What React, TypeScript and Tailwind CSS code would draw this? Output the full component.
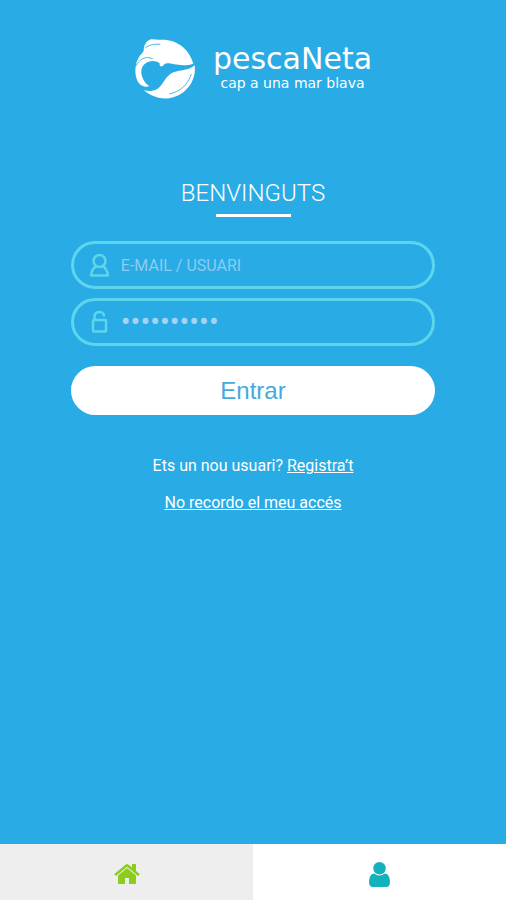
import { useState } from "react";

function FishLogo() {
  return (
    <svg viewBox="40 22 183 183" className="w-[61px] h-[61px]" aria-hidden="true">
      <path
        fill="#fff"
        d="M69 60C69 45 75 33 87 27C97 23 108 29 120 27C170 25 206 56 218 99C200 105 180 104 160 101C148 98 140 97 134 99C129 100 129 106 123 107C118 108 116 104 117 98C108 91 96 89 84 93C68 99 61 111 62 127C64 144 73 157 86 167C73 171 57 166 49 148C39 121 45 91 59 73C62 69 67 66 69 60Z"
      />
      <path
        fill="#fff"
        d="M222 104C227 140 208 172 179 191C146 211 103 207 69 178C88 184 106 180 117 169C130 155 134 140 150 129C171 117 200 123 222 104Z"
      />
      <path
        fill="none"
        stroke="#29abe5"
        strokeWidth="2.5"
        d="M73 53C84 43 101 39 119 41M46 106C57 85 74 75 96 84M146 190C178 183 202 162 212 130"
      />
    </svg>
  );
}

function UserOutlineIcon() {
  return (
    <svg
      viewBox="0 0 20 24"
      className="w-5 h-6"
      fill="none"
      stroke="currentColor"
      strokeWidth="2.5"
      strokeLinejoin="round"
      aria-hidden="true"
    >
      <circle cx="10.500" cy="8" r="6" />
      <path d="M7 13C4 15.500 2.500 18.500 2 22.500H19C18.500 18.500 17 15.500 14 13" />
    </svg>
  );
}

function LockOutlineIcon() {
  return (
    <svg
      viewBox="0 0 20 24"
      className="w-5 h-6"
      fill="none"
      stroke="currentColor"
      strokeWidth="2.5"
      strokeLinejoin="round"
      strokeLinecap="round"
      aria-hidden="true"
    >
      <rect x="4" y="10" width="13" height="11.500" rx="1" />
      <path d="M5.500 10V6.500C5.500 1 14.500 .5 15 5.500" />
    </svg>
  );
}

function HomeIcon() {
  return (
    <svg viewBox="0 253 1664 1283" className="w-[26px] h-5" fill="currentColor" aria-hidden="true">
      <path d="M1408 992v480q0 26-19 45t-45 19H960v-384H704v384H320q-26 0-45-19t-19-45V992q0-1 .5-3t.5-3l575-474 575 474q1 2 1 6zm223-69l-62 74q-8 9-21 11h-3q-13 0-21-7L832 424l-692 577q-12 8-24 7-13-2-21-11l-62-74q-8-10-7-23.500T37 878l719-599q32-26 76-26t76 26l244 204V288q0-14 9-23t23-9h192q14 0 23 9t9 23v408l219 182q10 8 11 21.500t-7 23.500z" />
    </svg>
  );
}

function UserIcon() {
  return (
    <svg viewBox="0 128 1280 1536" className="w-[21px] h-[25px]" fill="currentColor" aria-hidden="true">
      <path d="M1280 1399q0 109-62.500 187t-150.500 78H213q-88 0-150.500-78T0 1399q0-85 8.500-160.500t31.500-152 58.500-131 94-89T327 832q131 128 313 128t313-128q76 0 134.500 34.500t94 89 58.500 131 31.500 152 8.500 160.500zm-256-887q0 159-112.500 271.500T640 896 368.500 783.500 256 512t112.500-271.500T640 128t271.500 112.500T1024 512z" />
    </svg>
  );
}

export default function App() {
  const [user, setUser] = useState<string>("");
  const [password, setPassword] = useState<string>("pescaneta1");

  const handleSubmit = (event: React.FormEvent) => {
    event.preventDefault();
  };

  return (
    <div className="min-h-screen flex flex-col bg-[#29abe5] text-white font-[Roboto,sans-serif]">
      <header className="flex justify-center gap-[18px] pt-[38px]">
        <FishLogo />
        <div className="flex flex-col items-center pt-[5px] font-['DejaVu_Sans',sans-serif]">
          <span className="text-[30px] leading-8">pescaNeta</span>
          <span className="text-sm leading-4">cap a una mar blava</span>
        </div>
      </header>

      <main className="flex-1 flex flex-col px-[14%] pt-[78px]">
        <h1 className="text-2xl font-light text-center">BENVINGUTS</h1>
        <div className="w-[75px] h-[3px] mt-[5px] mx-auto bg-white" />

        <form onSubmit={handleSubmit} className="flex flex-col mt-6">
          <label className="flex items-center gap-3 h-12 px-[15px] rounded-full border-3 border-[#5cd6ec] text-[#5cd6ec]">
            <UserOutlineIcon />
            <input
              type="text"
              aria-label="E-mail / Usuari"
              placeholder="E-MAIL / USUARI"
              value={user}
              onChange={(e) => setUser(e.target.value)}
              className="flex-1 min-w-0 pt-0.5 text-base text-[#8ccdf0] placeholder:text-[#8ccdf0] focus:outline-none"
            />
          </label>
          <label className="flex items-center gap-3 h-12 px-[15px] mt-[9px] rounded-full border-3 border-[#5cd6ec] text-[#5cd6ec]">
            <LockOutlineIcon />
            <input
              type="password"
              aria-label="Contrasenya"
              value={password}
              onChange={(e) => setPassword(e.target.value)}
              className="flex-1 min-w-0 pt-0.5 text-[29px] text-[#a5d4f2] focus:outline-none"
            />
          </label>
          <button
            type="submit"
            className="h-[49px] mt-5 rounded-full bg-white text-[#45a9dc] text-2xl font-['Liberation_Sans',sans-serif]"
          >
            Entrar
          </button>
        </form>

        <div className="flex flex-col items-center gap-[13px] mt-[39px] text-base">
          <p>
            Ets un nou usuari?{" "}
            <a href="#registre" className="underline">
              Registra’t
            </a>
          </p>
          <a href="#acces" className="underline">
            No recordo el meu accés
          </a>
        </div>
      </main>

      <nav className="grid grid-cols-2 h-14">
        <a
          href="#inici"
          aria-label="Inici"
          className="flex items-center justify-center pt-1 bg-[#eeeeee] text-[#8ccc1a]"
        >
          <HomeIcon />
        </a>
        <a
          href="#perfil"
          aria-label="Perfil"
          className="flex items-center justify-center pt-1 bg-white text-[#12b1bb]"
        >
          <UserIcon />
        </a>
      </nav>
    </div>
  );
}
